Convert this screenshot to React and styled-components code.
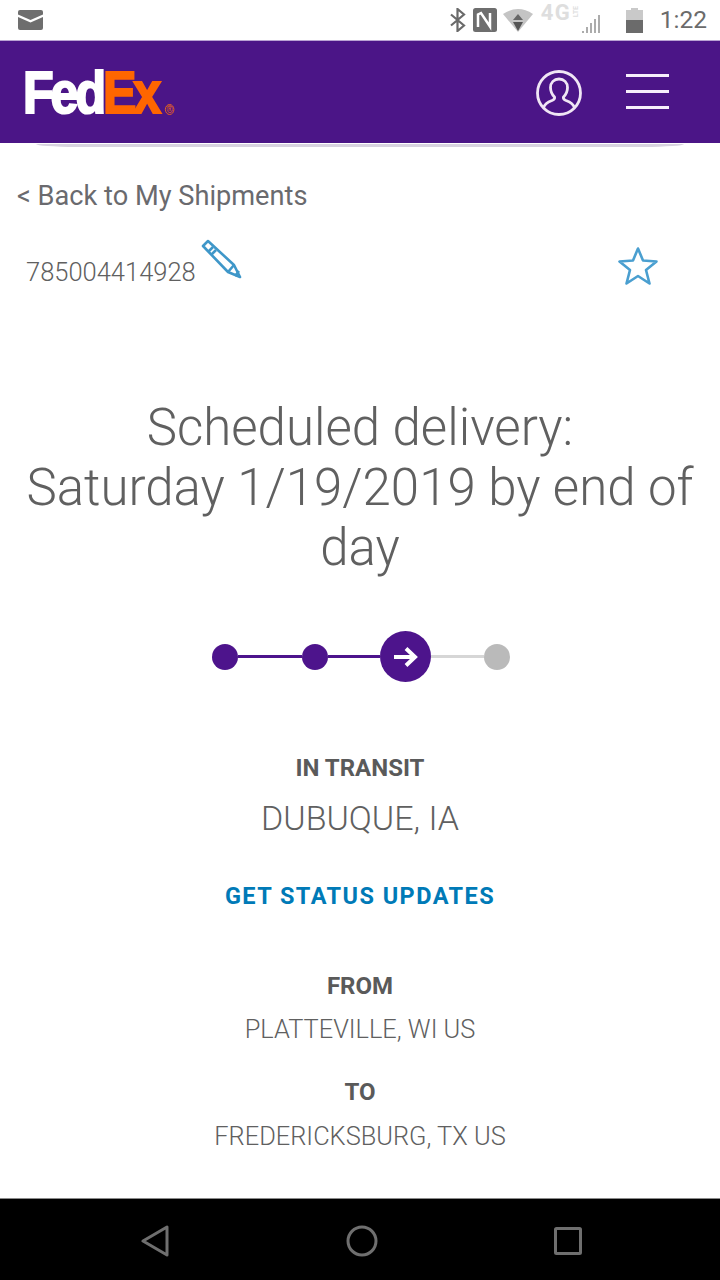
import React from 'react';
import styled, { createGlobalStyle } from 'styled-components';

const Global = createGlobalStyle`
  html, body { margin: 0; padding: 0; background: #fff; }
  body { font-family: Roboto, "Liberation Sans", sans-serif; }
`;
const Screen = styled.div`
  width: 720px; height: 1280px; display: flex; flex-direction: column; overflow: hidden; background: #fff;
`;
const StatusBar = styled.div`
  height: 40px; flex: none; display: flex; align-items: center; justify-content: space-between;
  padding: 0 13px 0 18px; box-sizing: border-box; background: #fff;
`;
const StatusRight = styled.div`display: flex; align-items: center;`;
const Network = styled.div`
  display: flex; align-items: flex-start; height: 40px; margin-left: 8px; width: 62px;
`;
const NetText = styled.span`
  font-size: 22px; line-height: 22px; font-weight: 700; color: #dedede; letter-spacing: 1.500px; margin-top: 2px;
`;
const Lte = styled.span`
  font-size: 7px; line-height: 8px; font-weight: 700; color: #dedede; writing-mode: vertical-rl; transform: rotate(180deg);
  margin: 6px 0 0 1px;
`;
const Signal = styled.svg`margin: 13px 0 0 1px; flex: none;`;
const Battery = styled.svg`margin-left: 23px;`;
const Clock = styled.span`
  font-size: 24.500px; color: #6b6b6b; font-weight: 400; margin-left: 17px; line-height: 40px;
`;
const Header = styled.header`
  height: 102px; flex: none; border-top: 1px solid #b9a3d3; box-sizing: content-box;
  display: flex; align-items: center; justify-content: space-between; padding: 0 51px 0 23px;
  background-color: #4b1587;
`;
const Logo = styled.div`
  font-family: "Liberation Sans", Arial, sans-serif; font-weight: 700; font-size: 59px; line-height: 60px;
  letter-spacing: -3.600px; display: flex; align-items: baseline; margin-top: 2px; -webkit-text-stroke: 2.200px currentColor;
  color: #fff; transform: scaleX(0.85); transform-origin: left center;
`;
const Ex = styled.span`color: #ff6600;`;
const Reg = styled.span`
  font-size: 10px; letter-spacing: 0; color: #f0661a; border: 1.500px solid #f0661a; border-radius: 50%;
  width: 9px; height: 9px; margin-left: 8px; -webkit-text-stroke: 0; line-height: 9px; text-align: center;
  font-weight: 400; overflow: hidden;
`;
const HeaderIcons = styled.div`display: flex; align-items: center; gap: 43px;`;
const Person = styled.svg`margin-top: 2px;`;
const Menu = styled.div`
  width: 43px; height: 35px; display: flex; flex-direction: column; justify-content: space-between; margin-top: -2px;
`;
const MenuBar = styled.span`height: 3px; background: #f6eefb; display: block;`;
const Curve = styled.div`
  height: 3px; margin: 1px 36px 0; flex: none; background: #d8d3e0; border-radius: 0 0 40px 40px / 0 0 3px 3px;
`;
const Content = styled.main`
  flex: 1; min-height: 0; display: flex; flex-direction: column; align-items: stretch; color: #606060;
`;
const Back = styled.div`
  font-size: 27.200px; line-height: 32px; color: #6a6a6e; margin: 33px 0 0 17px;
`;
const TrackRow = styled.div`
  display: flex; align-items: flex-start; margin-top: 15px; padding: 0 62px 0 26px;
  height: 60px;
`;
const TrackNo = styled.span`
  font-size: 25.500px; font-weight: 300; color: #606060; line-height: 30px; margin-top: 30px;
`;
const Pencil = styled.svg`margin: 12px 0 0 5px;`;
const Star = styled.svg`margin: 19px 0 0 auto;`;
const Heading = styled.h1`
  margin: 111px 0 0; padding: 0 24px; text-align: center; font-weight: 300; font-size: 51px; line-height: 60px; color: #606060;
`;
const Steps = styled.div`
  display: flex; align-items: center; margin: 53px 0 0 212px; height: 51px;
`;
const Dot = styled.span`
  width: 26px; height: 26px; border-radius: 50%; flex: none; background: ${p => p.$off ? '#bababa' : '#4d148c'};
`;
const Line = styled.span`
  height: 3px; flex: none; width: ${p => p.$w}px; background: ${p => p.$off ? '#d6d6d6' : '#4d148c'};
`;
const Current = styled.span`
  width: 51px; height: 51px; border-radius: 50%; background: #4d148c; flex: none;
  display: flex; align-items: center; justify-content: center;
`;
const Label = styled.div`
  text-align: center; font-weight: 700; font-size: 24px; color: #5a5a5a; line-height: 28px; margin-top: ${p => p.$mt}px;
`;
const Place = styled.div`
  text-align: center; font-weight: 300; color: #606060; font-size: ${p => p.$size}px; line-height: ${p => p.$lh}px; margin-top: ${p => p.$mt}px;
`;
const Updates = styled.div`
  text-align: center; font-weight: 700; font-size: 23.500px; line-height: 28px; letter-spacing: 1.450px; color: #007ab7; margin-top: 44px;
`;
const NavBar = styled.nav`
  height: 82px; flex: none; background: #000; border-top: 1px solid #8a8a8a; display: flex; align-items: center;
  justify-content: space-between; padding: 2px 138px 0 141px; box-sizing: border-box;
`;

export default function App() {
  return (
    <Screen>
      <Global />
      <StatusBar>
        <svg width="25" height="20" viewBox="0 0 25 20"><path d="M2 0h21a2 2 0 0 1 2 2v2.500L12.500 10 0 4.500V2a2 2 0 0 1 2-2z" fill="#6e6e6e"/><path d="M0 7l12.500 5.500L25 7v11a2 2 0 0 1-2 2H2a2 2 0 0 1-2-2z" fill="#6e6e6e"/></svg>
        <StatusRight>
          <svg width="20" height="24" viewBox="0 0 20 24" fill="none" stroke="#6a6a6a" strokeWidth="2.200"><path d="M3 6.500l13 11-6.500 5.500V1l6.500 5.500L3 17.500"/></svg>
          <svg style={{marginLeft:5}} width="24" height="24" viewBox="0 0 24 24"><rect width="24" height="24" rx="2.500" fill="#6e6e6e"/><path d="M5 19V6.500l3-1.500 9 13.500V5" fill="none" stroke="#fff" strokeWidth="2.500"/></svg>
          <svg style={{marginLeft:6}} width="30" height="24" viewBox="0 0 30 24"><path d="M0 6Q15-4 30 6L15 24z" fill="#c4c4c4"/><path d="M15 6l5 6H10z" fill="#666"/><path d="M10 14h10l-5 9z" fill="#555"/></svg>
          <Network>
            <NetText>4G</NetText>
            <Lte>LTE</Lte>
            <Signal width="21" height="20" viewBox="0 0 21 20" fill="none" stroke="#a4a4a4" strokeWidth="1.800">
              <path d="M2 18v2M6 14v6M10 10v10M14 6v14M18 2v18" />
            </Signal>
          </Network>
          <Battery width="17" height="25" viewBox="0 0 17 25"><path d="M5 0h7v2h5v23H0V2h5z" fill="#c9c9c9"/><path d="M0 12h17v13H0z" fill="#6b6b6b"/></Battery>
          <Clock>1:22</Clock>
        </StatusRight>
      </StatusBar>
      <Header>
        <Logo>Fed<Ex>Ex</Ex><Reg>®</Reg></Logo>
        <HeaderIcons>
          <Person width="48" height="48" viewBox="0 0 48 48" fill="none" stroke="#f0e6f5" strokeWidth="2.800">
            <circle cx="24" cy="24" r="21.500"/>
            <path d="M8.500 39c1-4 4-6 8.500-7.500 2-.8 3-2 2.500-3.500-2.500-2.500-4-5.500-4-9.500 0-5 3.500-8.500 8.500-8.500s8.500 3.500 8.500 8.500c0 4-1.500 7-4 9.500-.5 1.500.5 2.700 2.500 3.500 4.500 1.500 7.500 3.500 8.500 7.500"/>
          </Person>
          <Menu><MenuBar /><MenuBar /><MenuBar /></Menu>
        </HeaderIcons>
      </Header>
      <Curve />
      <Content>
        <Back>&lt; Back to My Shipments</Back>
        <TrackRow>
          <TrackNo>785004414928</TrackNo>
          <Pencil width="42" height="42" viewBox="0 0 42 42" fill="none" stroke="#3f97c9" strokeWidth="2.600" strokeLinejoin="round">
            <path d="M2 7l5-5 26 24 6 12-12-5z"/>
            <path d="M7 13l5-5M10 16l5-5M27 33l6-7M34 37l4-5" />
          </Pencil>
          <Star width="40" height="40" viewBox="0 0 40 40" fill="none" stroke="#4a9fd0" strokeWidth="2.600" strokeLinejoin="round">
            <path d="M20 2.500l5 12 13.500 1-10.500 8.500 3.500 13.500L20 30l-11.500 7.500L12 24 1.500 15.500l13.500-1z"/>
          </Star>
        </TrackRow>
        <Heading>Scheduled delivery:<br />Saturday 1/19/2019 by end of day</Heading>
        <Steps>
          <Dot />
          <Line $w={64} />
          <Dot />
          <Line $w={52} />
          <Current>
            <svg width="24" height="20" viewBox="0 0 24 20" fill="none" stroke="#fff" strokeWidth="4"><path d="M0 10h21M12 1.500l9 8.500-9 8.500"/></svg>
          </Current>
          <Line $w={53} $off />
          <Dot $off />
        </Steps>
        <Label $mt={72}>IN TRANSIT</Label>
        <Place $size={34} $lh={40} $mt={16}>DUBUQUE, IA</Place>
        <Updates>GET STATUS UPDATES</Updates>
        <Label $mt={62}>FROM</Label>
        <Place $size={25.400} $lh={30} $mt={14}>PLATTEVILLE, WI US</Place>
        <Label $mt={34}>TO</Label>
        <Place $size={25.400} $lh={30} $mt={15}>FREDERICKSBURG, TX US</Place>
      </Content>
      <NavBar>
        <svg width="28" height="32" viewBox="0 0 28 32" fill="none" stroke="#6f6f6f" strokeWidth="3" strokeLinejoin="round"><path d="M26 2v28L2 16z"/></svg>
        <svg width="32" height="32" viewBox="0 0 32 32" fill="none" stroke="#6f6f6f" strokeWidth="3"><circle cx="16" cy="16" r="14"/></svg>
        <svg width="28" height="28" viewBox="0 0 28 28" fill="none" stroke="#6f6f6f" strokeWidth="3" strokeLinejoin="round"><rect x="1.500" y="1.500" width="25" height="25" rx="1"/></svg>
      </NavBar>
    </Screen>
  );
}
